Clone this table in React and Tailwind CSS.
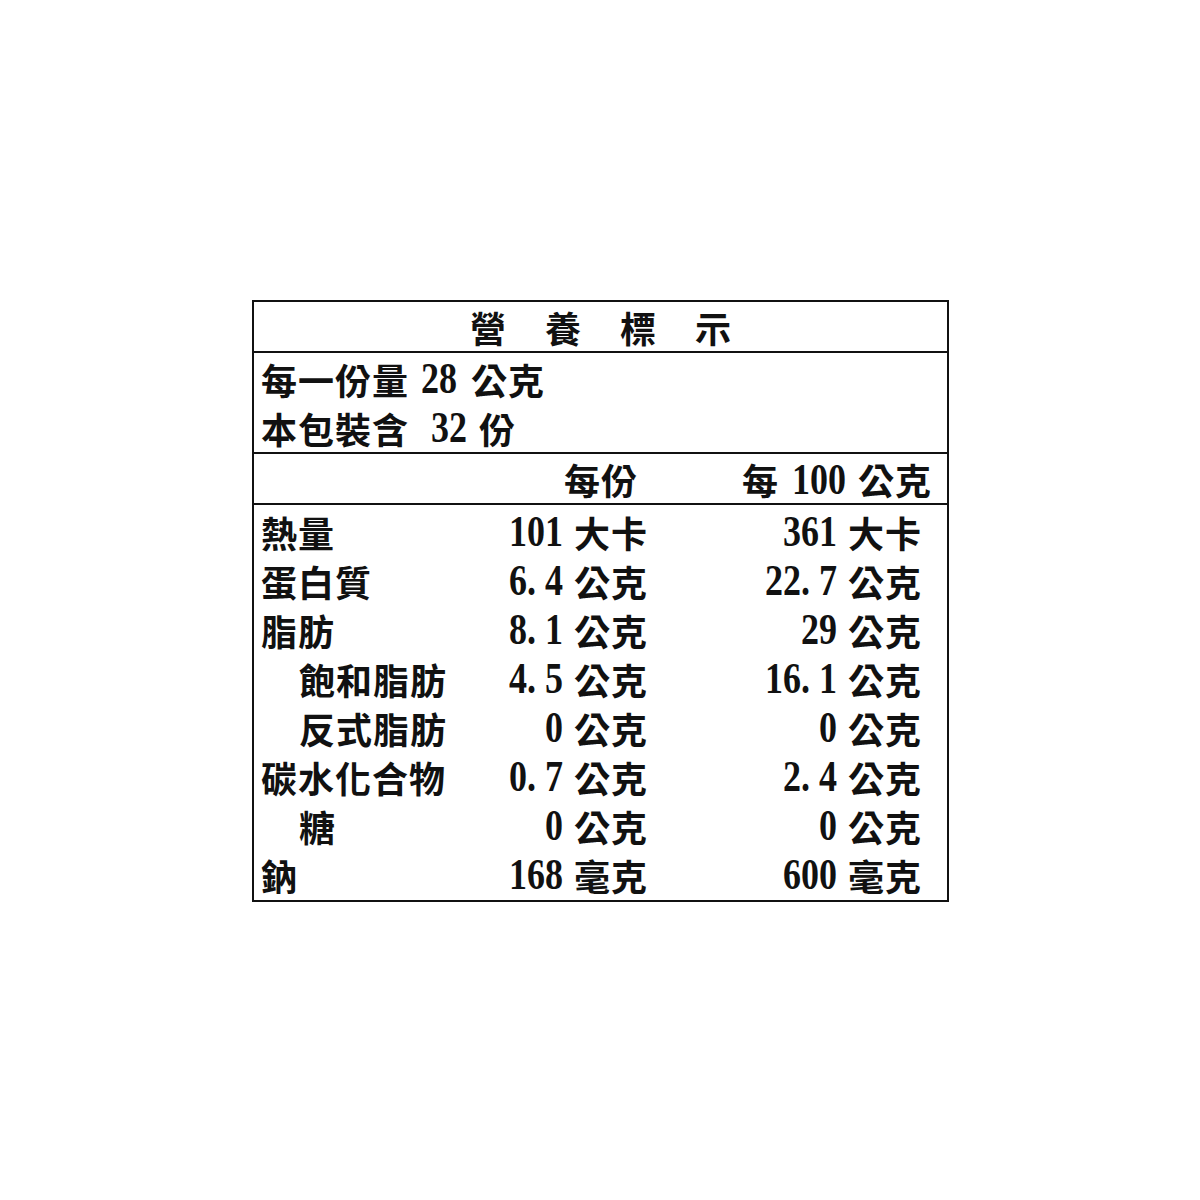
const cjk = "font-['Noto_Sans_CJK_TC',sans-serif] font-semibold text-[36px] leading-none tracking-[1px] whitespace-nowrap text-[#111]";

const rows = [
  ['熱量', false, '101', '大卡', '361', '大卡'],
  ['蛋白質', false, '6.4', '公克', '22.7', '公克'],
  ['脂肪', false, '8.1', '公克', '29', '公克'],
  ['飽和脂肪', true, '4.5', '公克', '16.1', '公克'],
  ['反式脂肪', true, '0', '公克', '0', '公克'],
  ['碳水化合物', false, '0.7', '公克', '2.4', '公克'],
  ['糖', true, '0', '公克', '0', '公克'],
  ['鈉', false, '168', '毫克', '600', '毫克'],
];

// tall, narrow serif digits: each char sits in an 18px cell
function Num({ v, className = '' }) {
  return (
    <span className={`inline-flex font-['Liberation_Serif',serif] font-bold text-[45px] leading-none text-[#111] ${className}`}>
      {v.split('').map((c, i) => (
        <span key={i} className="inline-block w-[18px]">
          <span className="inline-block origin-left scale-x-[0.8]">{c}</span>
        </span>
      ))}
    </span>
  );
}

function Cjk({ children, className = '' }) {
  return <span className={`${cjk} ${className}`}>{children}</span>;
}

export default function App() {
  return (
    <div className="w-[1200px] h-[1200px] bg-white pt-[300px] pl-[252px]">
      <div className="w-[697px] border-2 border-[#111]">
        {/* Title */}
        <div className="h-[51px] pt-[1px] flex items-center justify-center gap-[39px] border-b-2 border-[#111]">
          {['營', '養', '標', '示'].map((c) => (
            <Cjk key={c} className="tracking-normal">{c}</Cjk>
          ))}
        </div>

        {/* Serving */}
        <div className="border-b-2 border-[#111] pl-[7px] pt-[1px]">
          <div className="h-[49px] flex items-center">
            <Cjk>每一份量</Cjk>
            <Num v="28" className="ml-[12px]" />
            <Cjk className="ml-[14px]">公克</Cjk>
          </div>
          <div className="h-[49px] flex items-center">
            <Cjk>本包裝含</Cjk>
            <Num v="32" className="ml-[22px]" />
            <Cjk className="ml-[12px]">份</Cjk>
          </div>
        </div>

        {/* Column header */}
        <div className="h-[51px] pt-[1px] flex items-center border-b-2 border-[#111] pl-[310px]">
          <Cjk>每份</Cjk>
          <Cjk className="ml-[104px]">每</Cjk>
          <Num v="100" className="ml-[13px]" />
          <Cjk className="ml-[12px]">公克</Cjk>
        </div>

        {/* Nutrients */}
        <div className="pl-[7px] pt-[2px] pb-[1px]">
          {rows.map(([label, sub, v1, u1, v2, u2]) => (
            <div key={label} className="h-[49px] grid grid-cols-[213px_89px_86px_188px_1fr] grid-rows-[49px] items-center">
              <Cjk className={sub ? 'pl-[38px]' : ''}>{label}</Cjk>
              <div className="flex justify-end">
                <Num v={v1} />
              </div>
              <Cjk className="pl-[11px]">{u1}</Cjk>
              <div className="flex justify-end">
                <Num v={v2} />
              </div>
              <Cjk className="pl-[11px]">{u2}</Cjk>
            </div>
          ))}
        </div>
      </div>
    </div>
  );
}
